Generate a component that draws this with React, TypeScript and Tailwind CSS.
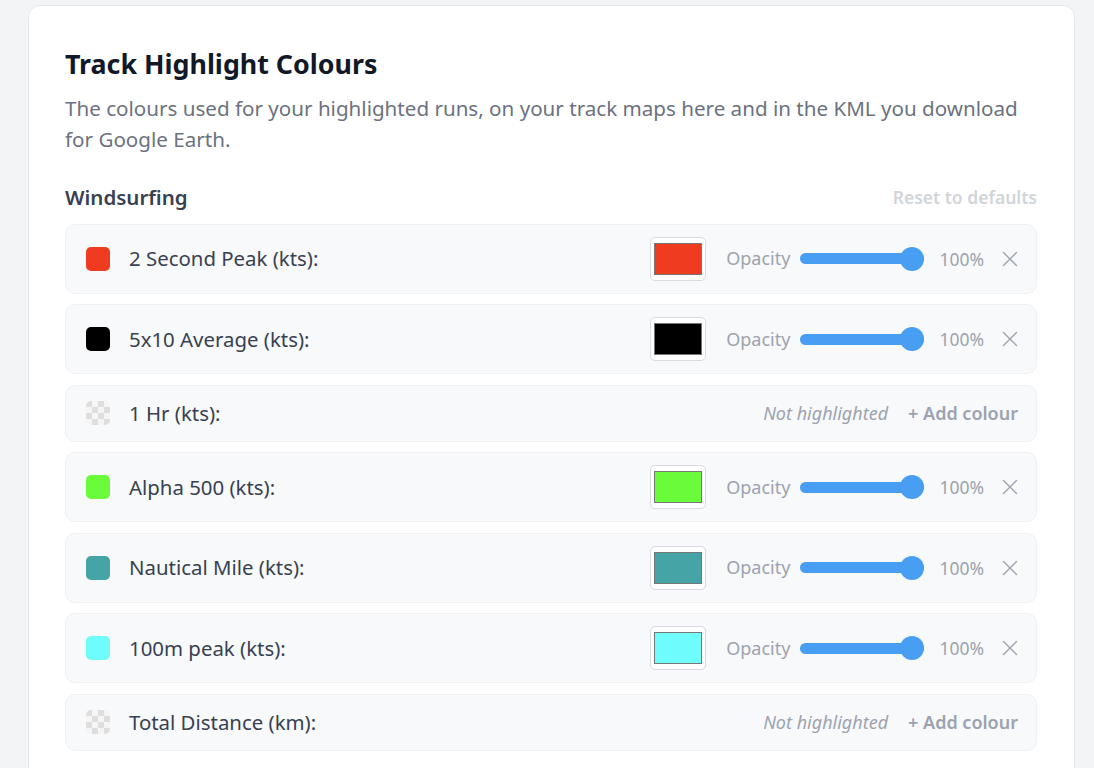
import React from 'react';

type Metric = {
  label: string;
  colour: string | null;
};

const metrics: Metric[] = [
  { label: '2 Second Peak (kts):', colour: '#ef3b1f' },
  { label: '5x10 Average (kts):', colour: '#000000' },
  { label: '1 Hr (kts):', colour: null },
  { label: 'Alpha 500 (kts):', colour: '#6afb3a' },
  { label: 'Nautical Mile (kts):', colour: '#45a5a6' },
  { label: '100m peak (kts):', colour: '#6ffcfd' },
  { label: 'Total Distance (km):', colour: null },
];

const Checker: React.FC = () => (
  <div className="grid h-6 w-6 grid-cols-4 overflow-hidden rounded-[5px]">
    {Array.from({ length: 16 }).map((_, i) => {
      const dark = (Math.floor(i / 4) + i) % 2 === 0;
      return <div key={i} className={dark ? 'bg-[#dedede]' : 'bg-[#f5f5f5]'} />;
    })}
  </div>
);

const CloseIcon: React.FC = () => (
  <svg width="16" height="16" viewBox="0 0 16 16" className="text-[#9ca3af]">
    <path d="M1.5 1.5 L14.5 14.5 M14.5 1.5 L1.5 14.5" stroke="currentColor" strokeWidth="1.4" strokeLinecap="round" />
  </svg>
);

const OpacitySlider: React.FC = () => (
  <div className="relative flex h-6 w-[124px] items-center">
    <div className="h-[11px] w-full rounded-full bg-[#479ef2]" />
    <div className="absolute right-0 top-0 h-6 w-6 rounded-full bg-[#479ef2]" />
  </div>
);

const MetricRow: React.FC<{ metric: Metric }> = ({ metric }) => (
  <div
    className={`flex items-center rounded-[10px] border border-[#f0f1f4] bg-[#f8f9fb] pl-5 pr-[18px] ${
      metric.colour ? 'h-[70px]' : 'h-[57px]'
    }`}
  >
    {metric.colour ? (
      <div className="h-6 w-6 rounded-[5px]" style={{ backgroundColor: metric.colour }} />
    ) : (
      <Checker />
    )}
    <span className="ml-[19px] text-[20.4px] text-[#374151]">{metric.label}</span>
    <div className="ml-auto flex items-center">
      {metric.colour ? (
        <>
          <div className="flex h-[44px] w-[56px] items-center justify-center rounded-[5px] border border-[#d9dce1] bg-white">
            <div
              className="h-[32px] w-[48px] border border-[#767676]"
              style={{ backgroundColor: metric.colour }}
            />
          </div>
          <span className="ml-[20px] text-[18px] text-[#9ca3af]">Opacity</span>
          <div className="ml-[10px]">
            <OpacitySlider />
          </div>
          <span className="ml-[15px] text-[17.5px] text-[#9ca3af]">100%</span>
          <div className="ml-[18px]">
            <CloseIcon />
          </div>
        </>
      ) : (
        <>
          <span className="text-[18px] italic text-[#9ca3af]">Not highlighted</span>
          <span className="ml-5 text-[18px] font-semibold text-[#9ca3af]">+ Add colour</span>
        </>
      )}
    </div>
  </div>
);

export default function App() {
  return (
    <div className="min-h-[768px] bg-[#f3f4f6] pl-[28px] pt-[5px] font-['Segoe_UI','Noto_Sans',sans-serif]">
      <div className="w-[1047px] rounded-[12px] border border-[#e5e7eb] bg-white pb-10 pl-[36px] pr-[37px] pt-[38px]">
        <h2 className="text-[26.8px] font-bold leading-[40px] text-[#111827]">Track Highlight Colours</h2>
        <p className="mt-[9px] text-[20.6px] leading-[31px] text-[#6b7280]">
          The colours used for your highlighted runs, on your track maps here and in the KML you download
          for Google Earth.
        </p>
        <div className="mt-[27px] flex items-center justify-between">
          <h3 className="text-[20.5px] font-semibold text-[#374151]">Windsurfing</h3>
          <span className="text-[17.5px] font-semibold text-[#d1d5db]">Reset to defaults</span>
        </div>
        <div className="mt-[11px] flex flex-col gap-[10.5px]">
          {metrics.map((m) => (
            <MetricRow key={m.label} metric={m} />
          ))}
        </div>
      </div>
    </div>
  );
}
